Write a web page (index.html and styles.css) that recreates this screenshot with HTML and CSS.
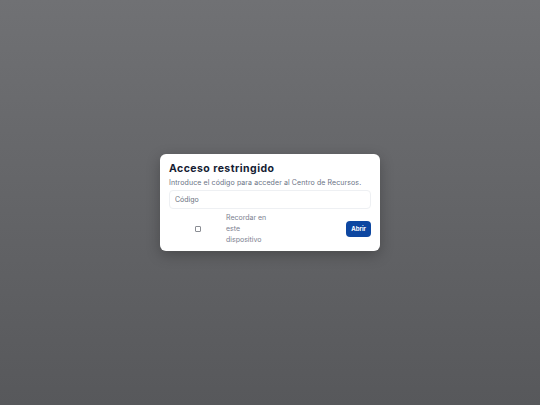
FILE: index.html
```html
<!DOCTYPE html>
<html>
<head>
  <meta charset="utf-8">
  <title>Acceso restringido</title>
  <link rel="stylesheet" href="styles.css">
</head>
<body>
  <div class="overlay">
    <form class="gate" onsubmit="return false">
      <h1>Acceso restringido</h1>
      <p>Introduce el código para acceder al Centro de Recursos.</p>
      <input type="password" class="code" placeholder="Código">
      <div class="actions">
        <label class="remember">
          <span class="check"><input type="checkbox"></span>
          <span class="remember-text">Recordar en este dispositivo</span>
        </label>
        <button type="submit">Abrir</button>
      </div>
    </form>
  </div>
</body>
</html>
```

FILE: styles.css
```css
html, body {
  margin: 0;
  height: 100%;
}

body {
  font-family: Inter, "Noto Sans", sans-serif;
  background: linear-gradient(#707174, #57585b);
}

.overlay {
  height: 100%;
  display: flex;
  align-items: center;
  justify-content: center;
}

.gate {
  width: 202px;
  background: #fff;
  border-radius: 6px;
  padding: 8px 9px 6px 9px;
  box-shadow: 0 4px 14px rgba(0, 0, 0, 0.25);
}

.gate h1 {
  margin: 0 0 3px;
  font-size: 10.5px;
  font-weight: 700;
  color: #151c33;
  letter-spacing: 0.45px;
}

.gate p {
  margin: 0 0 3px;
  font-size: 7px;
  color: #6a7385;
  letter-spacing: 0.1px;
}

.code {
  display: block;
  width: 100%;
  box-sizing: border-box;
  height: 19px;
  border: 1px solid #eef0f3;
  border-radius: 4px;
  padding: 0 5px;
  font-family: inherit;
  font-size: 7px;
  color: #333;
  outline: none;
}

.code::placeholder {
  color: #6b7280;
}

.actions {
  display: flex;
  align-items: center;
  margin-top: 3px;
}

.remember {
  display: flex;
  align-items: center;
}

.check {
  width: 57px;
  display: flex;
  justify-content: center;
}

/* small square box, the native one renders too round at this size */
.check input {
  appearance: none;
  margin: 0;
  width: 6px;
  height: 6px;
  border: 1px solid #8a8d93;
  border-radius: 1px;
  background: #fff;
}

.check input:checked {
  background: #0d47a1;
  border-color: #0d47a1;
}

.remember-text {
  width: 44px;
  font-size: 7px;
  line-height: 11px;
  color: #7b8190;
}

button {
  margin-left: auto;
  background: #0d47a1;
  color: #fff;
  border: none;
  border-radius: 4px;
  font-family: inherit;
  font-size: 6px;
  font-weight: 700;
  padding: 0 5px;
  height: 16px;
  cursor: pointer;
}
```
